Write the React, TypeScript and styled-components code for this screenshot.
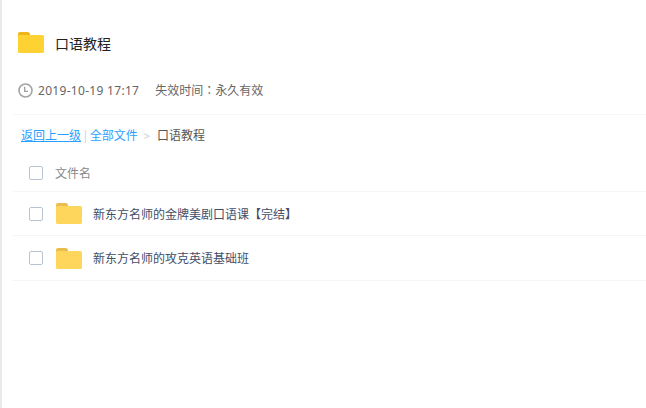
import React from 'react';
import styled, { createGlobalStyle } from 'styled-components';

const GlobalStyle = createGlobalStyle`
  html, body {
    margin: 0;
    padding: 0;
    background: #fff;
    overflow: hidden;
  }
  body {
    font-family: "Noto Sans", "Noto Sans CJK SC", sans-serif;
  }
`;

const Page = styled.div`
  width: 646px;
  height: 408px;
  box-sizing: border-box;
  border-left: 2px solid #e9e9e9;
  padding-left: 11px;
  overflow: hidden;
`;

const TitleBar = styled.div`
  height: 78px;
  box-sizing: border-box;
  padding: 7px 0 0 5px;
  display: flex;
  align-items: center;
  gap: 11px;
`;

const Title = styled.h1`
  margin: 1px 0 0;
  font-size: 14px;
  font-weight: 400;
  color: #222;
`;

const Meta = styled.div`
  height: 24px;
  padding: 0 5px;
  display: flex;
  align-items: center;
  font-size: 12px;
  color: #666;
`;

const ClockIcon = styled.svg`
  margin-right: 5px;
`;

const Stamp = styled.span`
  letter-spacing: 0.3px;
`;

const Expire = styled.span`
  margin-left: 16px;
`;

const Colon = styled.span`
  font-family: "Noto Sans CJK TC", sans-serif;
`;

const Divider = styled.div`
  height: 1px;
  background: #f5f6f8;
  margin-top: 12px;
`;

const Crumbs = styled.nav`
  height: 40px;
  padding-left: 8px;
  display: flex;
  align-items: center;
  font-size: 12px;
  color: #666;
`;

const CrumbLink = styled.a<{ $underline?: boolean }>`
  color: #2b9fff;
  text-decoration: ${(props) => (props.$underline ? 'underline' : 'none')};
`;

const Bar = styled.span`
  color: #c4d8ea;
  margin: 0 1px;
`;

const Arrow = styled.span`
  color: #c5ccd6;
  margin: 0 7px 0 6px;
  font-size: 11px;
`;

const Current = styled.span`
  color: #555;
`;

const HeadRow = styled.div`
  height: 37px;
  box-sizing: border-box;
  padding-left: 16px;
  display: flex;
  align-items: center;
  border-bottom: 1px solid #f5f6f8;
  font-size: 12px;
  color: #888;
`;

const Row = styled.div`
  height: 44.4px;
  box-sizing: border-box;
  padding-left: 16px;
  display: flex;
  align-items: center;
  border-bottom: 1px solid #f2f4f8;
  font-size: 12px;
  color: #424e67;
`;

const Check = styled.span`
  display: block;
  width: 14px;
  height: 14px;
  box-sizing: border-box;
  flex: none;
  border: 1px solid #b8c4d2;
  border-radius: 2px;
  background: #fff;
`;

const HeadLabel = styled.span`
  margin-left: 12px;
`;

const RowFolder = styled.span`
  display: flex;
  margin: 0 11px 0 13px;
`;

function Folder({ width, height, tab, body }: { width: number; height: number; tab: string; body: string }) {
  return (
    <svg width={width} height={height} viewBox="0 0 26 21">
      <path d="M2 0h7.5c1.4 0 2.5 1 2.5 2.2V6H0V2a2 2 0 0 1 2-2z" fill={tab} />
      <rect x="0" y="3" width="26" height="18" rx="1.6" fill={body} />
    </svg>
  );
}

const files = ['新东方名师的金牌美剧口语课【完结】', '新东方名师的攻克英语基础班'];

export default function App() {
  return (
    <Page>
      <GlobalStyle />
      <TitleBar>
        <Folder width={26} height={21} tab="#f0b518" body="#ffd233" />
        <Title>口语教程</Title>
      </TitleBar>
      <Meta>
        <ClockIcon width="15" height="15" viewBox="0 0 15 15" fill="none" stroke="#a3a3a3">
          <circle cx="7.5" cy="7.5" r="6.5" strokeWidth="1.6" />
          <path d="M6.7 3.8v4.6h3.4" strokeWidth="1.4" />
        </ClockIcon>
        <Stamp>2019-10-19 17:17</Stamp>
        <Expire>
          失效时间<Colon>：</Colon>永久有效
        </Expire>
      </Meta>
      <Divider />
      <Crumbs>
        <CrumbLink $underline>返回上一级</CrumbLink>
        <Bar>|</Bar>
        <CrumbLink>全部文件</CrumbLink>
        <Arrow>&gt;</Arrow>
        <Current>口语教程</Current>
      </Crumbs>
      <HeadRow>
        <Check />
        <HeadLabel>文件名</HeadLabel>
      </HeadRow>
      {files.map((name) => (
        <Row key={name}>
          <Check />
          <RowFolder>
            <Folder width={26} height={21} tab="#e9bd4e" body="#ffd65c" />
          </RowFolder>
          {name}
        </Row>
      ))}
    </Page>
  );
}
